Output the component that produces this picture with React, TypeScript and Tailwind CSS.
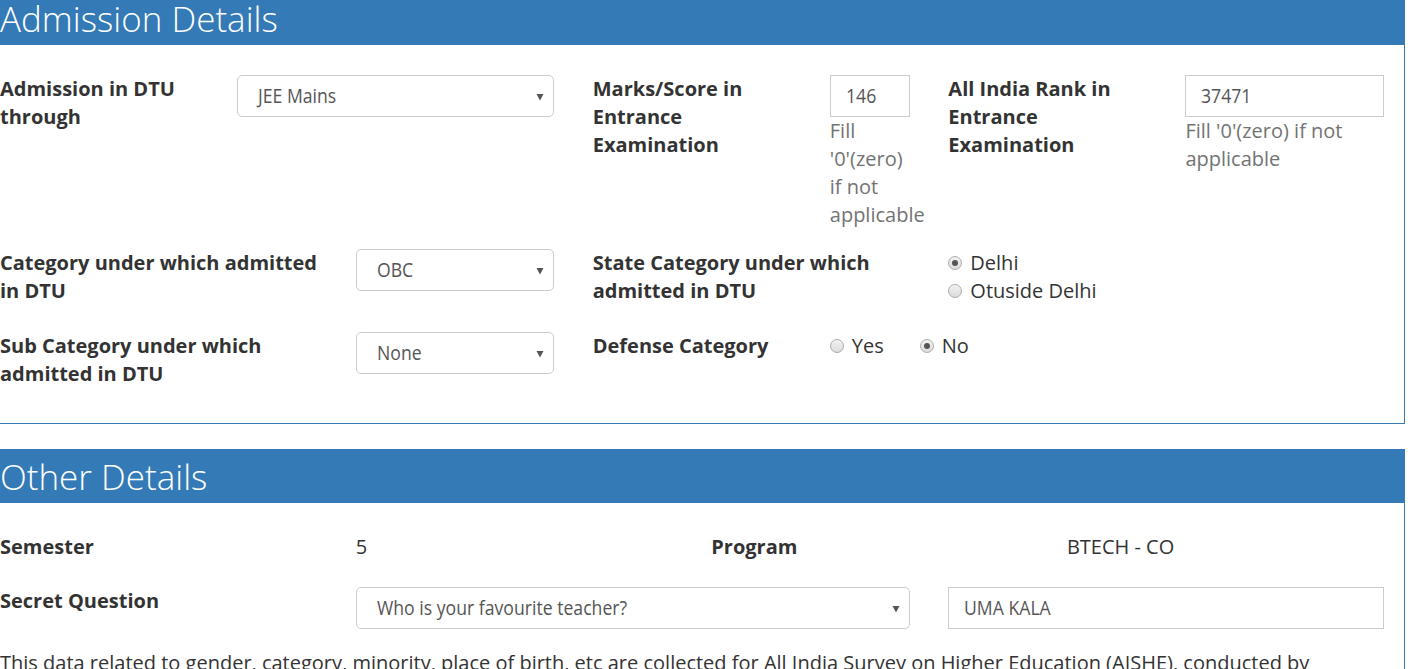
import React from "react";

const FONT = { fontFamily: '"Open Sans", "Noto Sans", sans-serif' };

function Label({ children }: { children: React.ReactNode }) {
  return <div className="text-[20px] leading-[28px] font-bold text-[#333]">{children}</div>;
}

function Narrow({ children }: { children: React.ReactNode }) {
  return (
    <span className="inline-block whitespace-nowrap origin-left scale-x-[0.9] text-[19.6px] leading-[28px] text-[#555]">
      {children}
    </span>
  );
}

function Select({ value }: { value: string }) {
  return (
    <div className="relative h-[42px] border border-[#ccc] rounded-[5px] bg-white flex items-center pl-[20px]">
      <Narrow>{value}</Narrow>
      <svg className="absolute right-[9px] top-[17px]" width="8" height="8" viewBox="0 0 8 8">
        <polygon points="0.5,1 7.5,1 4,7.5" fill="#555" />
      </svg>
    </div>
  );
}

function Input({ value }: { value: string }) {
  return (
    <div className="h-[42px] border border-[#ccc] bg-white flex items-center pl-[15px]">
      <Narrow>{value}</Narrow>
    </div>
  );
}

function Help({ children }: { children: React.ReactNode }) {
  return <div className="text-[20px] leading-[28px] text-[#737373]">{children}</div>;
}

function Radio({ label, checked }: { label: string; checked?: boolean }) {
  return (
    <div className="flex items-center gap-[8px] h-[28px]">
      <span className="w-[14px] h-[14px] rounded-full border border-[#acacac] bg-gradient-to-b from-[#f2f2f2] to-[#dcdcdc] flex items-center justify-center">
        {checked && <span className="w-[6px] h-[6px] rounded-full bg-[#555]" />}
      </span>
      <span className="text-[20px] leading-[28px] text-[#333]">{label}</span>
    </div>
  );
}

function Heading({ title }: { title: string }) {
  return (
    <div className="h-[54px] bg-[#337ab7] pt-[9px]">
      <div className="text-[35px] leading-[37px] font-light text-white">{title}</div>
    </div>
  );
}

export default function App() {
  return (
    <div className="w-[1424px] min-h-[669px] bg-white overflow-hidden" style={FONT}>
      {/* Admission Details panel */}
      <div className="w-[1405px] border-r border-b border-[#337ab7] mt-[-9px]">
        <Heading title="Admission Details" />
        <div className="pt-[30px] pb-[35px]">
          <div className="w-[1384px] grid grid-cols-12 gap-x-[38.5px] mb-[20px]">
            <div className="col-span-2">
              <Label>Admission in DTU through</Label>
            </div>
            <div className="col-span-3">
              <Select value="JEE Mains" />
            </div>
            <div className="col-span-2">
              <Label>Marks/Score in Entrance Examination</Label>
            </div>
            <div className="col-span-1">
              <Input value="146" />
              <Help>Fill '0'(zero) if not applicable</Help>
            </div>
            <div className="col-span-2">
              <Label>All India Rank in Entrance Examination</Label>
            </div>
            <div className="col-span-2">
              <Input value="37471" />
              <Help>Fill '0'(zero) if not applicable</Help>
            </div>
          </div>

          <div className="w-[1384px] grid grid-cols-12 gap-x-[38.5px] mb-[27px]">
            <div className="col-span-3">
              <Label>Category under which admitted in DTU</Label>
            </div>
            <div className="col-span-2">
              <Select value="OBC" />
            </div>
            <div className="col-start-6 col-span-3">
              <Label>State Category under which admitted in DTU</Label>
            </div>
            <div className="col-start-9 col-span-3">
              <Radio label="Delhi" checked />
              <Radio label="Otuside Delhi" />
            </div>
          </div>

          <div className="w-[1384px] grid grid-cols-12 gap-x-[38.5px]">
            <div className="col-span-3">
              <Label>Sub Category under which admitted in DTU</Label>
            </div>
            <div className="col-span-2">
              <Select value="None" />
            </div>
            <div className="col-start-6 col-span-2">
              <Label>Defense Category</Label>
            </div>
            <div className="col-start-8 col-span-4 flex gap-[36px]">
              <Radio label="Yes" />
              <Radio label="No" checked />
            </div>
          </div>
        </div>
      </div>

      {/* Other Details panel */}
      <div className="w-[1405px] border-r border-[#337ab7] mt-[25px]">
        <Heading title="Other Details" />
        <div className="pt-[30px]">
          <div className="w-[1384px] grid grid-cols-12 gap-x-[38.5px] mb-[26px]">
            <div className="col-span-3">
              <Label>Semester</Label>
            </div>
            <div className="col-span-3 text-[20px] leading-[28px] text-[#333]">5</div>
            <div className="col-span-3">
              <Label>Program</Label>
            </div>
            <div className="col-span-3 text-[20px] leading-[28px] text-[#333]">BTECH - CO</div>
          </div>

          <div className="w-[1384px] grid grid-cols-12 gap-x-[38.5px] mb-[20px]">
            <div className="col-span-3">
              <Label>Secret Question</Label>
            </div>
            <div className="col-span-5">
              <Select value="Who is your favourite teacher?" />
            </div>
            <div className="col-span-4">
              <Input value="UMA KALA" />
            </div>
          </div>

          <p className="w-[1384px] text-[20px] leading-[28px] text-[#333]">
            This data related to gender, category, minority, place of birth, etc are collected for All India Survey on Higher Education (AISHE), conducted by Ministry of Human Resource Development, Government of India.
          </p>
        </div>
      </div>
    </div>
  );
}
